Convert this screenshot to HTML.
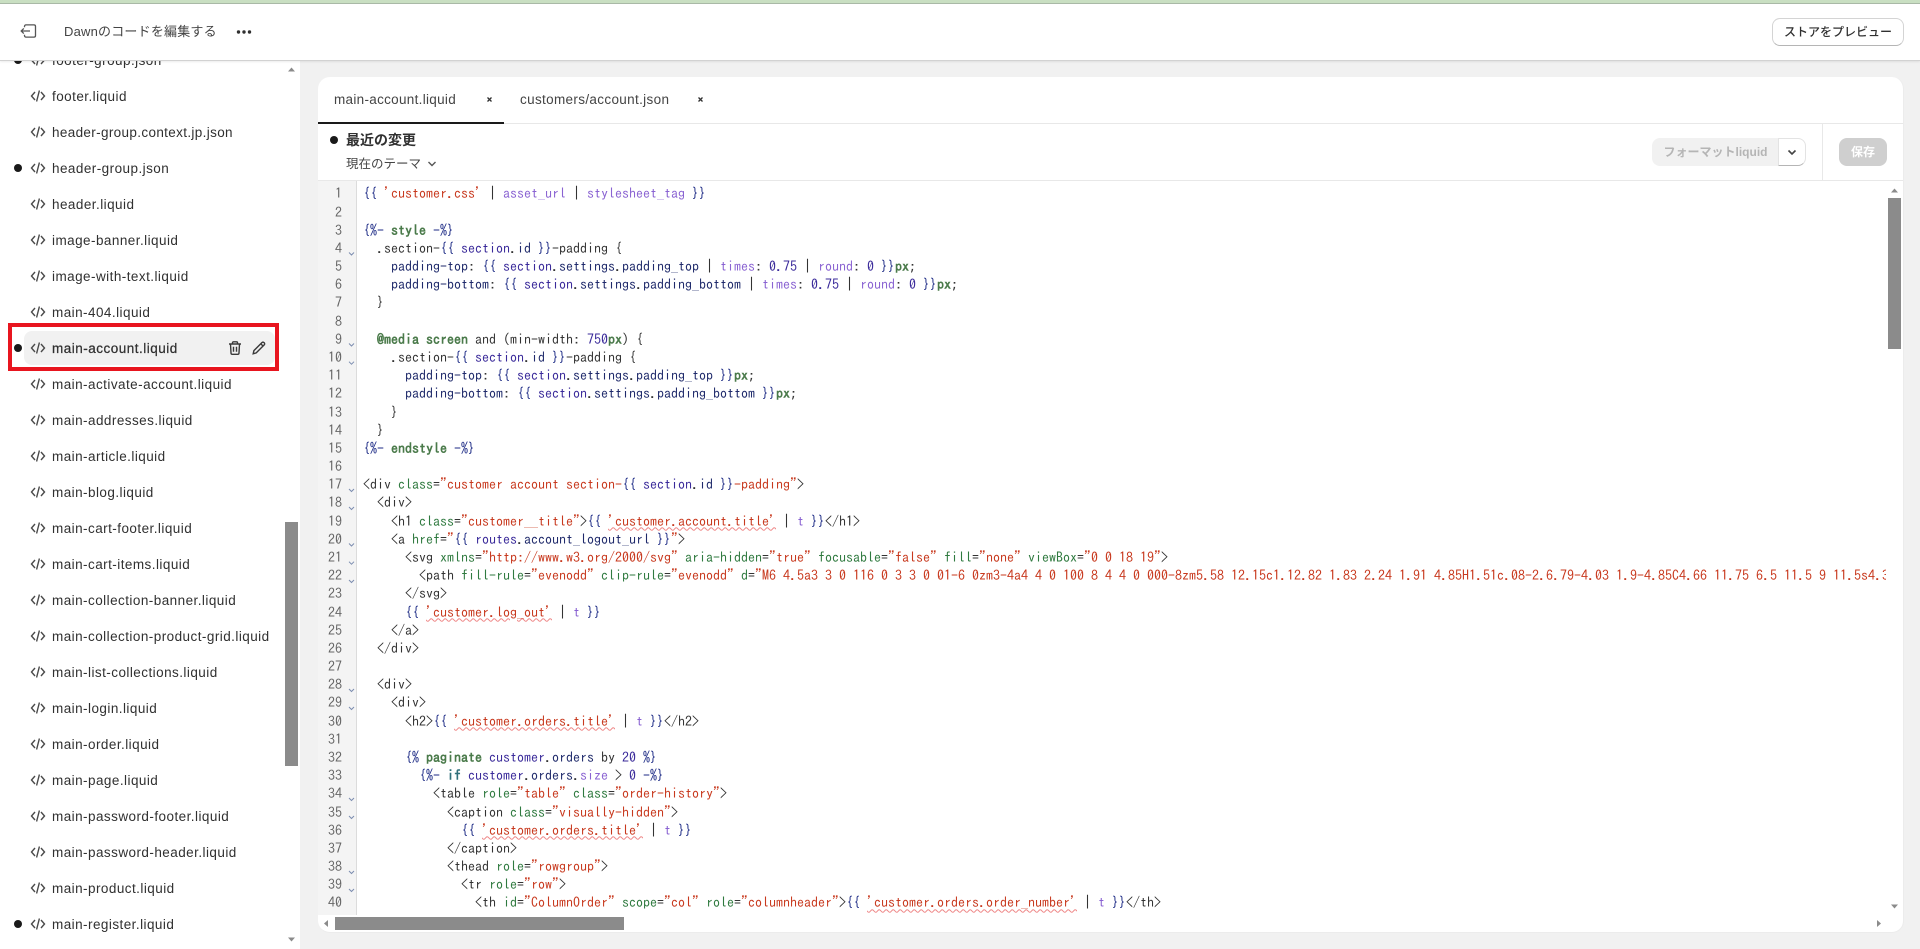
<!DOCTYPE html>
<html lang="ja"><head><meta charset="utf-8"><title>Dawn</title>
<style>
*{box-sizing:border-box}
html,body{margin:0;padding:0;width:1920px;height:949px;overflow:hidden;background:#f1f1f1;font-family:"Liberation Sans","Noto Sans CJK JP",sans-serif;color:#303030}
.abs,.it,.it *{position:absolute}
#top{position:absolute;left:0;top:0;width:1920px;height:61px;background:#fff;border-bottom:1px solid #d2d2d2;box-shadow:0 1px 2px rgba(0,0,0,.08);z-index:5}
#green{position:absolute;left:0;top:0;width:1920px;height:4px;background:#c9dfc2;border-bottom:1px solid #a9b9a6}
#title{position:absolute;left:64px;top:22px;font-size:13px;line-height:20px;color:#444;white-space:nowrap;letter-spacing:.2px}
#prev{position:absolute;left:1772px;top:18px;width:132px;height:28px;border:1px solid #d4d4d4;border-bottom-color:#b5b5b5;border-radius:8px;font-size:12px;font-weight:500;line-height:26px;text-align:center;color:#303030;background:#fff}
#side{position:absolute;left:0;top:0;width:300px;height:949px;background:#fff}
.it{left:0;width:300px;height:36px}
.it b{left:14px;top:14px;width:8px;height:8px;border-radius:50%;background:#1a1a1a}
.it svg{left:30px;top:10px}
.it span{left:52px;top:10px;font-size:13.5px;line-height:18px;letter-spacing:.45px;color:#303030;white-space:nowrap}
#card{position:absolute;left:318px;top:77px;width:1586px;height:856px;background:#fff;border-radius:12px;overflow:hidden;border-bottom:1px solid #ececec;border-right:1px solid #ececec}
.lc{position:absolute;white-space:pre;font-family:"IPAGothic","Liberation Mono",monospace;font-size:14px;line-height:18.18px;height:18.18px;letter-spacing:0}
#nums .lc{width:24px;left:0;text-align:right;color:#666}
#code .lc{left:0;color:#333}
.s{color:#c8391e}.a{color:#2f7a3f}.n{color:#1c2a85}.v{color:#3a2a9a}.m{color:#1f2a6b}.f{color:#8a63d2}
.k{font-weight:700;color:#4a7a4a}
.u{text-decoration:underline wavy #ee8585 1px;text-underline-offset:1px;color:#c8391e}
</style></head><body>

<div id="side">
<div class="it" style="top:42px"><b></b><svg width="16" height="16" viewBox="0 0 16 16" fill="none" stroke="#4a4a4a" stroke-width="1.4"><path d="M5 4L1.5 8 5 12M11 4l3.5 4L11 12M9.4 2.5L6.6 13.5"/></svg><span>footer-group.json</span></div>
<div class="it" style="top:78px"><svg width="16" height="16" viewBox="0 0 16 16" fill="none" stroke="#4a4a4a" stroke-width="1.4"><path d="M5 4L1.5 8 5 12M11 4l3.5 4L11 12M9.4 2.5L6.6 13.5"/></svg><span>footer.liquid</span></div>
<div class="it" style="top:114px"><svg width="16" height="16" viewBox="0 0 16 16" fill="none" stroke="#4a4a4a" stroke-width="1.4"><path d="M5 4L1.5 8 5 12M11 4l3.5 4L11 12M9.4 2.5L6.6 13.5"/></svg><span style="letter-spacing:.35px">header-group.context.jp.json</span></div>
<div class="it" style="top:150px"><b></b><svg width="16" height="16" viewBox="0 0 16 16" fill="none" stroke="#4a4a4a" stroke-width="1.4"><path d="M5 4L1.5 8 5 12M11 4l3.5 4L11 12M9.4 2.5L6.6 13.5"/></svg><span>header-group.json</span></div>
<div class="it" style="top:186px"><svg width="16" height="16" viewBox="0 0 16 16" fill="none" stroke="#4a4a4a" stroke-width="1.4"><path d="M5 4L1.5 8 5 12M11 4l3.5 4L11 12M9.4 2.5L6.6 13.5"/></svg><span>header.liquid</span></div>
<div class="it" style="top:222px"><svg width="16" height="16" viewBox="0 0 16 16" fill="none" stroke="#4a4a4a" stroke-width="1.4"><path d="M5 4L1.5 8 5 12M11 4l3.5 4L11 12M9.4 2.5L6.6 13.5"/></svg><span>image-banner.liquid</span></div>
<div class="it" style="top:258px"><svg width="16" height="16" viewBox="0 0 16 16" fill="none" stroke="#4a4a4a" stroke-width="1.4"><path d="M5 4L1.5 8 5 12M11 4l3.5 4L11 12M9.4 2.5L6.6 13.5"/></svg><span>image-with-text.liquid</span></div>
<div class="it" style="top:294px"><svg width="16" height="16" viewBox="0 0 16 16" fill="none" stroke="#4a4a4a" stroke-width="1.4"><path d="M5 4L1.5 8 5 12M11 4l3.5 4L11 12M9.4 2.5L6.6 13.5"/></svg><span>main-404.liquid</span></div>
<div class="abs" style="left:24px;top:331px;width:251px;height:34px;background:#f1f1f1;border-radius:8px"></div>
<div class="it" style="top:330px"><b></b><svg width="16" height="16" viewBox="0 0 16 16" fill="none" stroke="#4a4a4a" stroke-width="1.4"><path d="M5 4L1.5 8 5 12M11 4l3.5 4L11 12M9.4 2.5L6.6 13.5"/></svg><span style="-webkit-text-stroke:.25px #303030;letter-spacing:.5px">main-account.liquid</span></div>
<svg class="abs" style="left:227px;top:340px" width="16" height="16" viewBox="0 0 16 16" fill="none" stroke="#3a3a3a" stroke-width="1.4"><path d="M2 4h12M5.5 4V2.8c0-.6.4-1 1-1h3c.6 0 1 .4 1 1V4M3.5 4l.5 9c0 .8.6 1.3 1.3 1.3h5.4c.7 0 1.3-.5 1.3-1.3l.5-9M6.5 6.8v5M9.5 6.8v5"/></svg>
<svg class="abs" style="left:251px;top:340px" width="16" height="16" viewBox="0 0 16 16" fill="none" stroke="#3a3a3a" stroke-width="1.4"><path d="M2.2 13.8l.7-3.2 8-8c.6-.6 1.5-.6 2.1 0l.2.2c.6.6.6 1.5 0 2.1l-8 8zM9.8 3.8l2.4 2.4"/></svg>
<div class="it" style="top:366px"><svg width="16" height="16" viewBox="0 0 16 16" fill="none" stroke="#4a4a4a" stroke-width="1.4"><path d="M5 4L1.5 8 5 12M11 4l3.5 4L11 12M9.4 2.5L6.6 13.5"/></svg><span>main-activate-account.liquid</span></div>
<div class="it" style="top:402px"><svg width="16" height="16" viewBox="0 0 16 16" fill="none" stroke="#4a4a4a" stroke-width="1.4"><path d="M5 4L1.5 8 5 12M11 4l3.5 4L11 12M9.4 2.5L6.6 13.5"/></svg><span>main-addresses.liquid</span></div>
<div class="it" style="top:438px"><svg width="16" height="16" viewBox="0 0 16 16" fill="none" stroke="#4a4a4a" stroke-width="1.4"><path d="M5 4L1.5 8 5 12M11 4l3.5 4L11 12M9.4 2.5L6.6 13.5"/></svg><span>main-article.liquid</span></div>
<div class="it" style="top:474px"><svg width="16" height="16" viewBox="0 0 16 16" fill="none" stroke="#4a4a4a" stroke-width="1.4"><path d="M5 4L1.5 8 5 12M11 4l3.5 4L11 12M9.4 2.5L6.6 13.5"/></svg><span>main-blog.liquid</span></div>
<div class="it" style="top:510px"><svg width="16" height="16" viewBox="0 0 16 16" fill="none" stroke="#4a4a4a" stroke-width="1.4"><path d="M5 4L1.5 8 5 12M11 4l3.5 4L11 12M9.4 2.5L6.6 13.5"/></svg><span>main-cart-footer.liquid</span></div>
<div class="it" style="top:546px"><svg width="16" height="16" viewBox="0 0 16 16" fill="none" stroke="#4a4a4a" stroke-width="1.4"><path d="M5 4L1.5 8 5 12M11 4l3.5 4L11 12M9.4 2.5L6.6 13.5"/></svg><span>main-cart-items.liquid</span></div>
<div class="it" style="top:582px"><svg width="16" height="16" viewBox="0 0 16 16" fill="none" stroke="#4a4a4a" stroke-width="1.4"><path d="M5 4L1.5 8 5 12M11 4l3.5 4L11 12M9.4 2.5L6.6 13.5"/></svg><span>main-collection-banner.liquid</span></div>
<div class="it" style="top:618px"><svg width="16" height="16" viewBox="0 0 16 16" fill="none" stroke="#4a4a4a" stroke-width="1.4"><path d="M5 4L1.5 8 5 12M11 4l3.5 4L11 12M9.4 2.5L6.6 13.5"/></svg><span>main-collection-product-grid.liquid</span></div>
<div class="it" style="top:654px"><svg width="16" height="16" viewBox="0 0 16 16" fill="none" stroke="#4a4a4a" stroke-width="1.4"><path d="M5 4L1.5 8 5 12M11 4l3.5 4L11 12M9.4 2.5L6.6 13.5"/></svg><span>main-list-collections.liquid</span></div>
<div class="it" style="top:690px"><svg width="16" height="16" viewBox="0 0 16 16" fill="none" stroke="#4a4a4a" stroke-width="1.4"><path d="M5 4L1.5 8 5 12M11 4l3.5 4L11 12M9.4 2.5L6.6 13.5"/></svg><span>main-login.liquid</span></div>
<div class="it" style="top:726px"><svg width="16" height="16" viewBox="0 0 16 16" fill="none" stroke="#4a4a4a" stroke-width="1.4"><path d="M5 4L1.5 8 5 12M11 4l3.5 4L11 12M9.4 2.5L6.6 13.5"/></svg><span>main-order.liquid</span></div>
<div class="it" style="top:762px"><svg width="16" height="16" viewBox="0 0 16 16" fill="none" stroke="#4a4a4a" stroke-width="1.4"><path d="M5 4L1.5 8 5 12M11 4l3.5 4L11 12M9.4 2.5L6.6 13.5"/></svg><span>main-page.liquid</span></div>
<div class="it" style="top:798px"><svg width="16" height="16" viewBox="0 0 16 16" fill="none" stroke="#4a4a4a" stroke-width="1.4"><path d="M5 4L1.5 8 5 12M11 4l3.5 4L11 12M9.4 2.5L6.6 13.5"/></svg><span>main-password-footer.liquid</span></div>
<div class="it" style="top:834px"><svg width="16" height="16" viewBox="0 0 16 16" fill="none" stroke="#4a4a4a" stroke-width="1.4"><path d="M5 4L1.5 8 5 12M11 4l3.5 4L11 12M9.4 2.5L6.6 13.5"/></svg><span>main-password-header.liquid</span></div>
<div class="it" style="top:870px"><svg width="16" height="16" viewBox="0 0 16 16" fill="none" stroke="#4a4a4a" stroke-width="1.4"><path d="M5 4L1.5 8 5 12M11 4l3.5 4L11 12M9.4 2.5L6.6 13.5"/></svg><span>main-product.liquid</span></div>
<div class="it" style="top:906px"><b></b><svg width="16" height="16" viewBox="0 0 16 16" fill="none" stroke="#4a4a4a" stroke-width="1.4"><path d="M5 4L1.5 8 5 12M11 4l3.5 4L11 12M9.4 2.5L6.6 13.5"/></svg><span>main-register.liquid</span></div>
<div class="abs" style="left:8px;top:323px;width:271px;height:48px;border:4px solid #e8151f"></div>
<svg class="abs" style="left:285px;top:64px" width="13" height="10"><path d="M3 7.5L6.5 3.5 10 7.5z" fill="#8b8b8b"/></svg>
<div class="abs" style="left:285px;top:522px;width:13px;height:244px;background:#8b8b8b"></div>
<svg class="abs" style="left:285px;top:935px" width="13" height="10"><path d="M3 2.5h7L6.5 6.5z" fill="#8b8b8b"/></svg>
</div>

<div id="top">
<div id="green"></div>
<svg class="abs" style="left:20px;top:24px" width="17" height="14" viewBox="0 0 17 14" fill="none" stroke="#555" stroke-width="1.3"><path d="M4.5 3.2V2.4c0-.9.6-1.5 1.5-1.5h8c.9 0 1.5.6 1.5 1.5v9.2c0 .9-.6 1.5-1.5 1.5H6c-.9 0-1.5-.6-1.5-1.5v-.8M10 7H1.2M3.8 4.4L1.2 7l2.6 2.6"/></svg>
<div id="title">Dawnのコードを編集する</div>
<svg class="abs" style="left:236px;top:29px" width="16" height="6"><circle cx="2.5" cy="3" r="1.7" fill="#303030"/><circle cx="8" cy="3" r="1.7" fill="#303030"/><circle cx="13.5" cy="3" r="1.7" fill="#303030"/></svg>
<div id="prev">ストアをプレビュー</div>
</div>

<div id="card">
<!-- tabs -->
<div class="abs" style="left:0;top:46px;width:1586px;height:1px;background:#e8e8e8"></div>
<div class="abs" style="left:0;top:45px;width:186px;height:2px;background:#1a1a1a"></div>
<div class="abs" style="left:16px;top:14px;font-size:13.5px;line-height:18px;letter-spacing:.3px;color:#444;white-space:nowrap">main-account.liquid</div>
<svg class="abs" style="left:168px;top:19px" width="8" height="8"><path d="M1.5 1.5l4 4M5.5 1.5l-4 4" stroke="#303030" stroke-width="1.3"/></svg>
<div class="abs" style="left:202px;top:14px;font-size:13.5px;line-height:18px;letter-spacing:.34px;color:#444;white-space:nowrap">customers/account.json</div>
<svg class="abs" style="left:379px;top:19px" width="8" height="8"><path d="M1.5 1.5l4 4M5.5 1.5l-4 4" stroke="#303030" stroke-width="1.3"/></svg>
<!-- toolbar -->
<div class="abs" style="left:12px;top:59px;width:8px;height:8px;border-radius:50%;background:#1a1a1a"></div>
<div class="abs" style="left:28px;top:53px;font-size:14px;line-height:20px;font-weight:700;color:#303030;white-space:nowrap">最近の変更</div>
<div class="abs" style="left:28px;top:77px;font-size:12.5px;line-height:20px;color:#444;white-space:nowrap">現在のテーマ</div>
<svg class="abs" style="left:109px;top:83px" width="10" height="8" viewBox="0 0 10 8" fill="none" stroke="#555" stroke-width="1.4"><path d="M1.5 2L5 5.5 8.5 2"/></svg>
<div class="abs" style="left:0;top:103px;width:1586px;height:1px;background:#e8e8e8"></div>
<div class="abs" style="left:1504px;top:47px;width:1px;height:57px;background:#e8e8e8"></div>
<div class="abs" style="left:1334px;top:61px;width:127px;height:28px;background:#f1f1f1;border-radius:8px 0 0 8px;font-size:12px;font-weight:700;line-height:28px;text-align:center;color:#b5b5b5;white-space:nowrap">フォーマットliquid</div>
<div class="abs" style="left:1460px;top:61px;width:28px;height:28px;background:#fff;border:1px solid #e3e3e3;border-bottom-color:#b5b5b5;border-radius:0 8px 8px 0"></div>
<svg class="abs" style="left:1469px;top:72px" width="10" height="8" viewBox="0 0 10 8" fill="none" stroke="#444" stroke-width="1.6"><path d="M1.5 1.5L5 5 8.5 1.5"/></svg>
<div class="abs" style="left:1521px;top:61px;width:48px;height:28px;background:#cfcfcf;border-radius:8px;font-size:12px;font-weight:700;line-height:28px;text-align:center;color:#fff">保存</div>
<!-- gutter -->
<div class="abs" style="left:0;top:104px;width:39px;height:734px;background:#f4f4f4;border-right:1px solid #dcdcdc"></div>
<div id="nums" class="abs" style="left:0;top:107.4px;width:24px;height:730px">
<div class="lc" style="top:0">1</div><div class="lc" style="top:18.18px">2</div><div class="lc" style="top:36.36px">3</div><div class="lc" style="top:54.54px">4</div><div class="lc" style="top:72.72px">5</div><div class="lc" style="top:90.9px">6</div><div class="lc" style="top:109.08px">7</div><div class="lc" style="top:127.26px">8</div><div class="lc" style="top:145.44px">9</div><div class="lc" style="top:163.62px">10</div><div class="lc" style="top:181.8px">11</div><div class="lc" style="top:199.98px">12</div><div class="lc" style="top:218.16px">13</div><div class="lc" style="top:236.34px">14</div><div class="lc" style="top:254.52px">15</div><div class="lc" style="top:272.7px">16</div><div class="lc" style="top:290.88px">17</div><div class="lc" style="top:309.06px">18</div><div class="lc" style="top:327.24px">19</div><div class="lc" style="top:345.42px">20</div><div class="lc" style="top:363.6px">21</div><div class="lc" style="top:381.78px">22</div><div class="lc" style="top:399.96px">23</div><div class="lc" style="top:418.14px">24</div><div class="lc" style="top:436.32px">25</div><div class="lc" style="top:454.5px">26</div><div class="lc" style="top:472.68px">27</div><div class="lc" style="top:490.86px">28</div><div class="lc" style="top:509.04px">29</div><div class="lc" style="top:527.22px">30</div><div class="lc" style="top:545.4px">31</div><div class="lc" style="top:563.58px">32</div><div class="lc" style="top:581.76px">33</div><div class="lc" style="top:599.94px">34</div><div class="lc" style="top:618.12px">35</div><div class="lc" style="top:636.3px">36</div><div class="lc" style="top:654.48px">37</div><div class="lc" style="top:672.66px">38</div><div class="lc" style="top:690.84px">39</div><div class="lc" style="top:709.02px">40</div>
</div>
<svg class="abs" style="left:0;top:104px" width="39" height="734" fill="none" stroke="#7c8db0" stroke-width="1"><path d="M31 71.5l2.5 2.5 2.5-2.5M31 162.5l2.5 2.5 2.5-2.5M31 180.7l2.5 2.5 2.5-2.5M31 308l2.5 2.5 2.5-2.5M31 326l2.5 2.5 2.5-2.5M31 362.5l2.5 2.5 2.5-2.5M31 380.7l2.5 2.5 2.5-2.5M31 399l2.5 2.5 2.5-2.5M31 508l2.5 2.5 2.5-2.5M31 526l2.5 2.5 2.5-2.5M31 617l2.5 2.5 2.5-2.5M31 635l2.5 2.5 2.5-2.5M31 690l2.5 2.5 2.5-2.5M31 708l2.5 2.5 2.5-2.5"/></svg>
<!-- code -->
<div id="code" class="abs" style="left:45px;top:107.4px;width:1523px;height:730px;overflow:hidden">
<div class="lc" style="top:0"><span class="n">{{</span> <span class="s">'customer.css'</span> | <span class="f">asset_url</span> | <span class="f">stylesheet_tag</span> <span class="n">}}</span></div>
<div class="lc" style="top:36.36px"><span class="n">{%-</span> <span class="k">style</span> <span class="n">-%}</span></div>
<div class="lc" style="top:54.54px">  .section-<span class="n">{{</span> <span class="v">section</span>.<span class="m">id</span> <span class="n">}}</span>-padding {</div>
<div class="lc" style="top:72.72px">    <span class="m">padding-top</span>: <span class="n">{{</span> <span class="v">section</span>.<span class="m">settings</span>.<span class="m">padding_top</span> | <span class="f">times</span>: <span class="v">0.75</span> | <span class="f">round</span>: <span class="v">0</span> <span class="n">}}</span><span class="k">px</span>;</div>
<div class="lc" style="top:90.9px">    <span class="m">padding-bottom</span>: <span class="n">{{</span> <span class="v">section</span>.<span class="m">settings</span>.<span class="m">padding_bottom</span> | <span class="f">times</span>: <span class="v">0.75</span> | <span class="f">round</span>: <span class="v">0</span> <span class="n">}}</span><span class="k">px</span>;</div>
<div class="lc" style="top:109.08px">  }</div>
<div class="lc" style="top:145.44px">  <span class="k">@media screen</span> and (min-width: <span class="v">750</span><span class="k">px</span>) {</div>
<div class="lc" style="top:163.62px">    .section-<span class="n">{{</span> <span class="v">section</span>.<span class="m">id</span> <span class="n">}}</span>-padding {</div>
<div class="lc" style="top:181.8px">      <span class="m">padding-top</span>: <span class="n">{{</span> <span class="v">section</span>.<span class="m">settings</span>.<span class="m">padding_top</span> <span class="n">}}</span><span class="k">px</span>;</div>
<div class="lc" style="top:199.98px">      <span class="m">padding-bottom</span>: <span class="n">{{</span> <span class="v">section</span>.<span class="m">settings</span>.<span class="m">padding_bottom</span> <span class="n">}}</span><span class="k">px</span>;</div>
<div class="lc" style="top:218.16px">    }</div>
<div class="lc" style="top:236.34px">  }</div>
<div class="lc" style="top:254.52px"><span class="n">{%-</span> <span class="k">endstyle</span> <span class="n">-%}</span></div>
<div class="lc" style="top:290.88px">&lt;div <span class="a">class</span>=<span class="s">"customer account section-</span><span class="n">{{</span> <span class="v">section</span>.<span class="m">id</span> <span class="n">}}</span><span class="s">-padding"</span>&gt;</div>
<div class="lc" style="top:309.06px">  &lt;div&gt;</div>
<div class="lc" style="top:327.24px">    &lt;h1 <span class="a">class</span>=<span class="s">"customer__title"</span>&gt;<span class="n">{{</span> <span class="u">'customer.account.title'</span> | <span class="f">t</span> <span class="n">}}</span>&lt;/h1&gt;</div>
<div class="lc" style="top:345.42px">    &lt;a <span class="a">href</span>=<span class="s">"</span><span class="n">{{</span> <span class="v">routes</span>.<span class="m">account_logout_url</span> <span class="n">}}</span><span class="s">"</span>&gt;</div>
<div class="lc" style="top:363.6px">      &lt;svg <span class="a">xmlns</span>=<span class="s">"http://www.w3.org/2000/svg"</span> <span class="a">aria-hidden</span>=<span class="s">"true"</span> <span class="a">focusable</span>=<span class="s">"false"</span> <span class="a">fill</span>=<span class="s">"none"</span> <span class="a">viewBox</span>=<span class="s">"0 0 18 19"</span>&gt;</div>
<div class="lc" style="top:381.78px">        &lt;path <span class="a">fill-rule</span>=<span class="s">"evenodd"</span> <span class="a">clip-rule</span>=<span class="s">"evenodd"</span> <span class="a">d</span>=<span class="s">"M6 4.5a3 3 0 116 0 3 3 0 01-6 0zm3-4a4 4 0 100 8 4 4 0 000-8zm5.58 12.15c1.12.82 1.83 2.24 1.91 4.85H1.51c.08-2.6.79-4.03 1.9-4.85C4.66 11.75 6.5 11.5 9 11.5s4.3 .25 5.58 1.15z"</span></div>
<div class="lc" style="top:399.96px">      &lt;/svg&gt;</div>
<div class="lc" style="top:418.14px">      <span class="n">{{</span> <span class="u">'customer.log_out'</span> | <span class="f">t</span> <span class="n">}}</span></div>
<div class="lc" style="top:436.32px">    &lt;/a&gt;</div>
<div class="lc" style="top:454.5px">  &lt;/div&gt;</div>
<div class="lc" style="top:490.86px">  &lt;div&gt;</div>
<div class="lc" style="top:509.04px">    &lt;div&gt;</div>
<div class="lc" style="top:527.22px">      &lt;h2&gt;<span class="n">{{</span> <span class="u">'customer.orders.title'</span> | <span class="f">t</span> <span class="n">}}</span>&lt;/h2&gt;</div>
<div class="lc" style="top:563.58px">      <span class="n">{%</span> <span class="k">paginate</span> <span class="v">customer</span>.<span class="m">orders</span> by <span class="v">20</span> <span class="n">%}</span></div>
<div class="lc" style="top:581.76px">        <span class="n">{%-</span> <span class="k" style="color:#2f6f7a">if</span> <span class="v">customer</span>.<span class="m">orders</span>.<span class="f">size</span> &gt; <span class="v">0</span> <span class="n">-%}</span></div>
<div class="lc" style="top:599.94px">          &lt;table <span class="a">role</span>=<span class="s">"table"</span> <span class="a">class</span>=<span class="s">"order-history"</span>&gt;</div>
<div class="lc" style="top:618.12px">            &lt;caption <span class="a">class</span>=<span class="s">"visually-hidden"</span>&gt;</div>
<div class="lc" style="top:636.3px">              <span class="n">{{</span> <span class="u">'customer.orders.title'</span> | <span class="f">t</span> <span class="n">}}</span></div>
<div class="lc" style="top:654.48px">            &lt;/caption&gt;</div>
<div class="lc" style="top:672.66px">            &lt;thead <span class="a">role</span>=<span class="s">"rowgroup"</span>&gt;</div>
<div class="lc" style="top:690.84px">              &lt;tr <span class="a">role</span>=<span class="s">"row"</span>&gt;</div>
<div class="lc" style="top:709.02px">                &lt;th <span class="a">id</span>=<span class="s">"ColumnOrder"</span> <span class="a">scope</span>=<span class="s">"col"</span> <span class="a">role</span>=<span class="s">"columnheader"</span>&gt;<span class="n">{{</span> <span class="u">'customer.orders.order_number'</span> | <span class="f">t</span> <span class="n">}}</span>&lt;/th&gt;</div>
</div>
<!-- scrollbars -->
<svg class="abs" style="left:1570px;top:108px" width="13" height="10"><path d="M3 7.5L6.5 3.5 10 7.5z" fill="#8b8b8b"/></svg>
<div class="abs" style="left:1570px;top:121px;width:13px;height:151px;background:#8b8b8b"></div>
<svg class="abs" style="left:1570px;top:825px" width="13" height="10"><path d="M3 2.5h7L6.5 6.5z" fill="#8b8b8b"/></svg>
<svg class="abs" style="left:3px;top:840px" width="10" height="13"><path d="M7 3v7L3 6.5z" fill="#8b8b8b"/></svg>
<div class="abs" style="left:17px;top:840px;width:289px;height:13px;background:#8b8b8b"></div>
<svg class="abs" style="left:1556px;top:840px" width="10" height="13"><path d="M3 3v7l4-3.5z" fill="#8b8b8b"/></svg>
</div>
</body></html>
